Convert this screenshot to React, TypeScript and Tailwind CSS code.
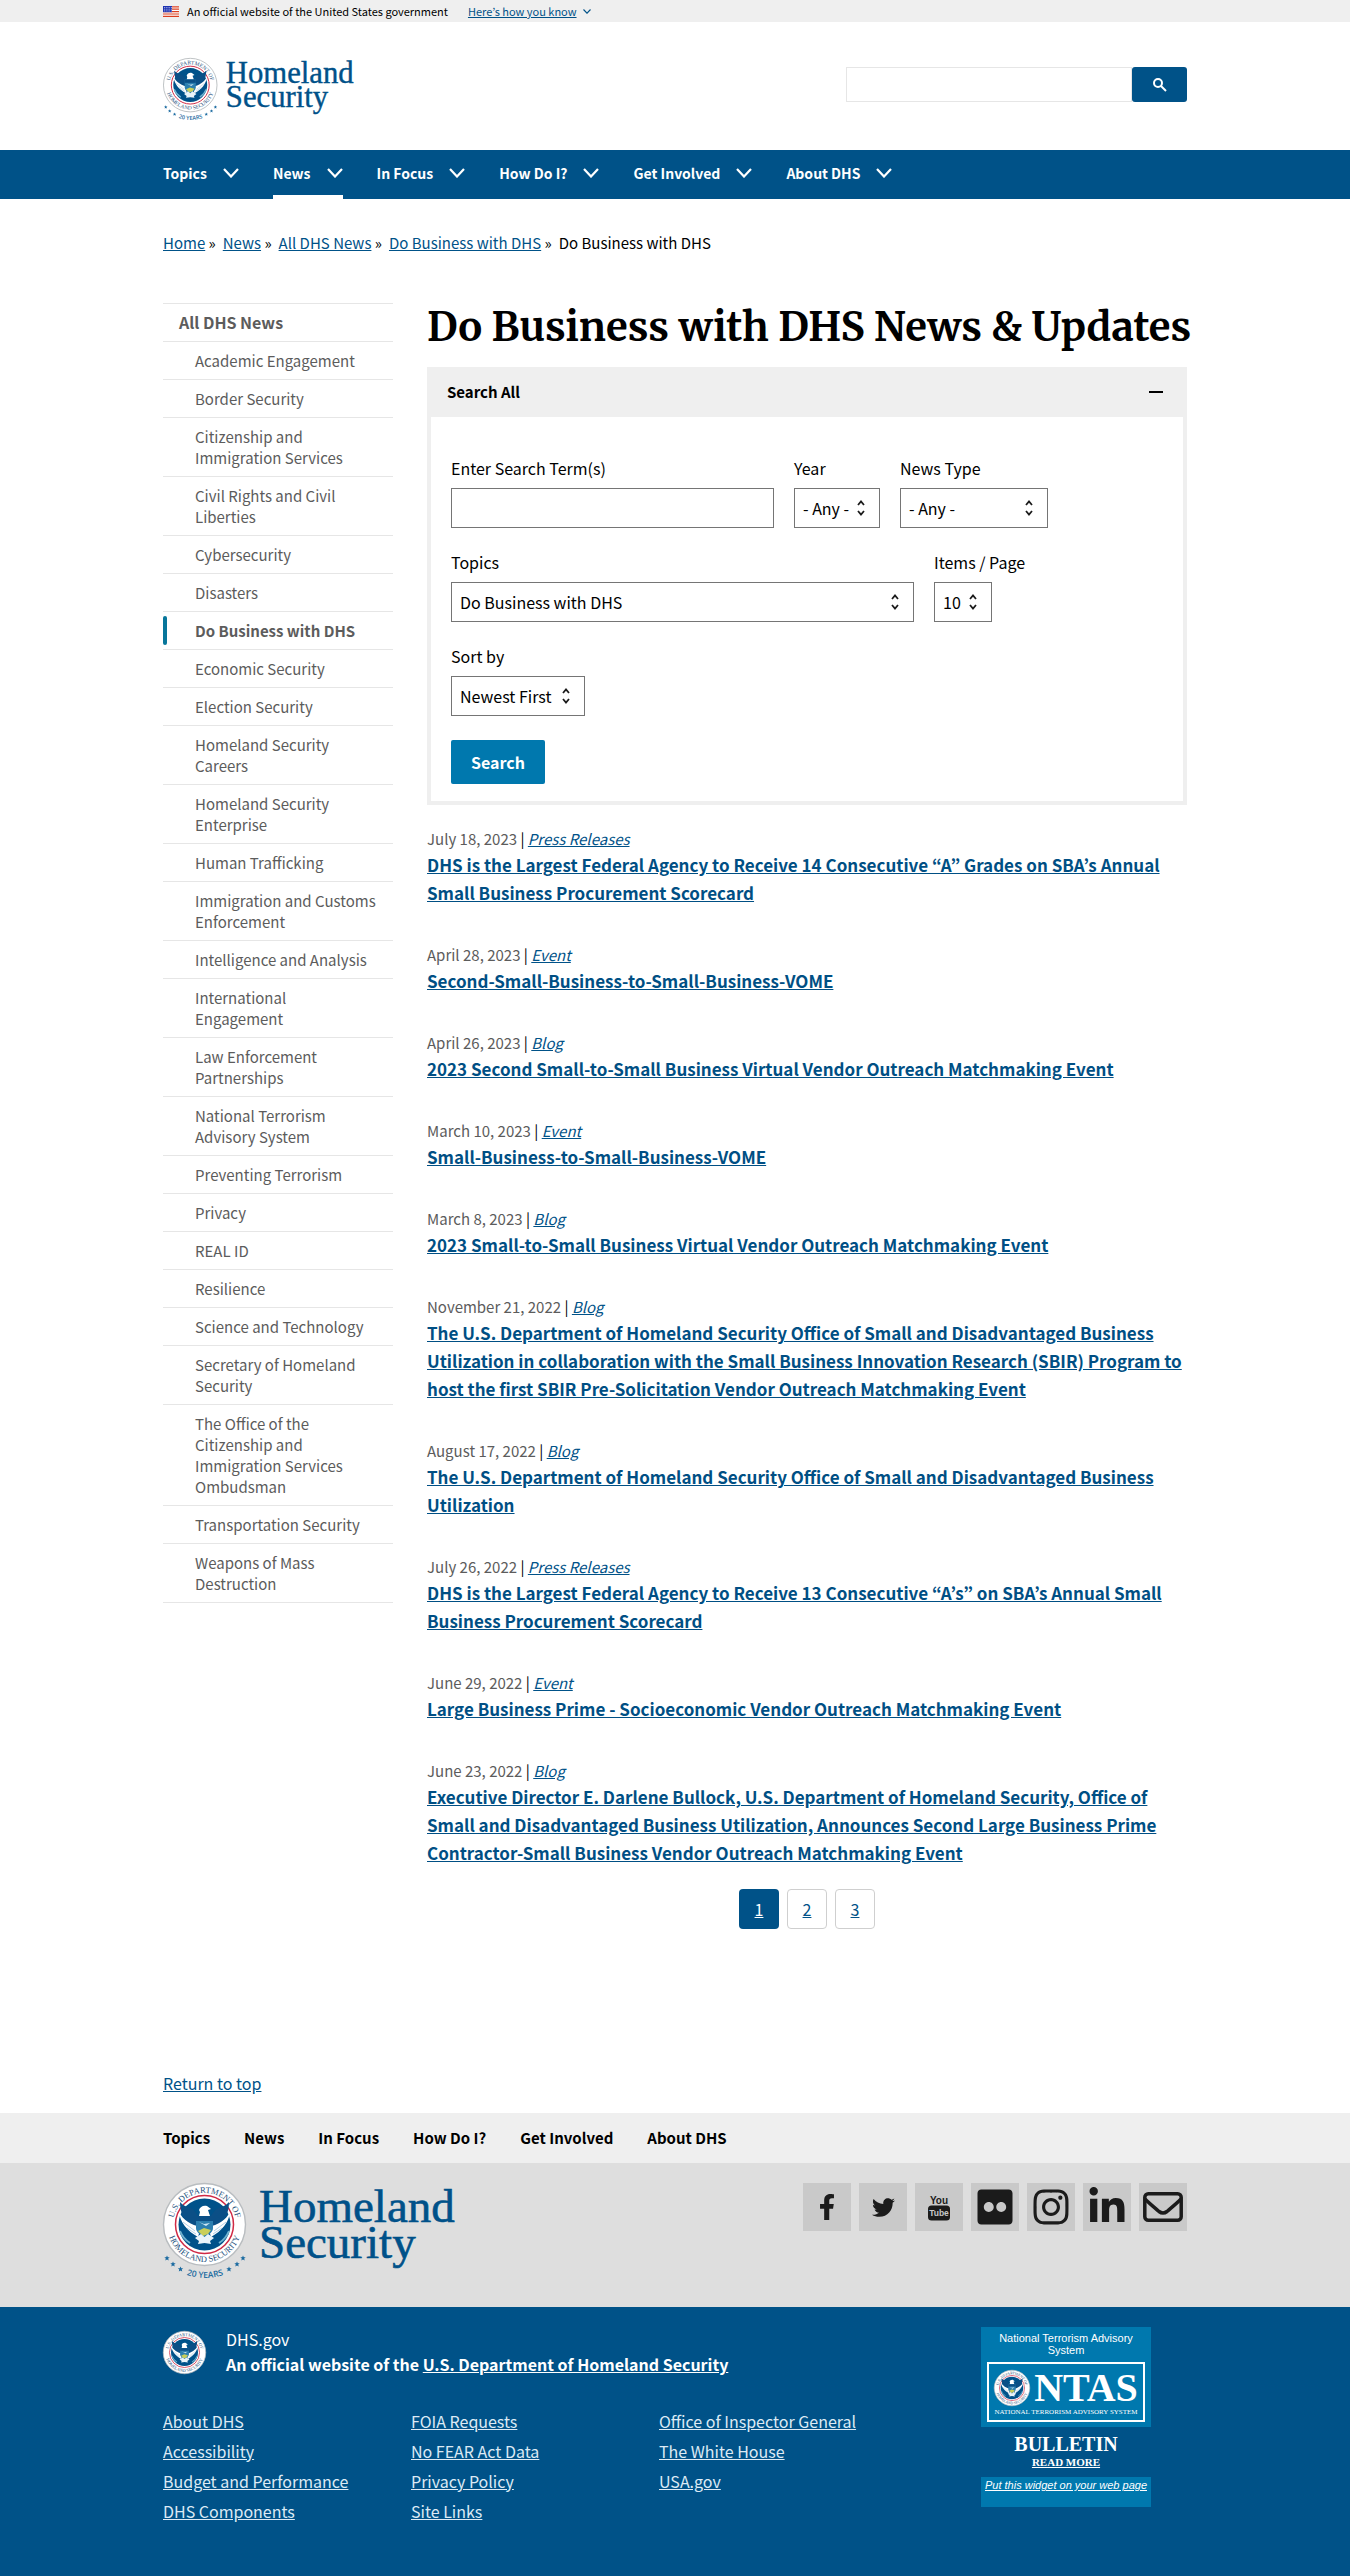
import { useId, type ReactNode } from "react";
import { FaFacebookF, FaFlickr, FaInstagram, FaLinkedinIn, FaTwitter } from "react-icons/fa";

const sections = ["Topics", "News", "In Focus", "How Do I?", "Get Involved", "About DHS"];

const newsTopics = [
  "Academic Engagement",
  "Border Security",
  "Citizenship and Immigration Services",
  "Civil Rights and Civil Liberties",
  "Cybersecurity",
  "Disasters",
  "Do Business with DHS",
  "Economic Security",
  "Election Security",
  "Homeland Security Careers",
  "Homeland Security Enterprise",
  "Human Trafficking",
  "Immigration and Customs Enforcement",
  "Intelligence and Analysis",
  "International Engagement",
  "Law Enforcement Partnerships",
  "National Terrorism Advisory System",
  "Preventing Terrorism",
  "Privacy",
  "REAL ID",
  "Resilience",
  "Science and Technology",
  "Secretary of Homeland Security",
  "The Office of the Citizenship and Immigration Services Ombudsman",
  "Transportation Security",
  "Weapons of Mass Destruction",
];

const results = [
  { date: "July 18, 2023", type: "Press Releases", title: "DHS is the Largest Federal Agency to Receive 14 Consecutive “A” Grades on SBA’s Annual Small Business Procurement Scorecard" },
  { date: "April 28, 2023", type: "Event", title: "Second-Small-Business-to-Small-Business-VOME" },
  { date: "April 26, 2023", type: "Blog", title: "2023 Second Small-to-Small Business Virtual Vendor Outreach Matchmaking Event" },
  { date: "March 10, 2023", type: "Event", title: "Small-Business-to-Small-Business-VOME" },
  { date: "March 8, 2023", type: "Blog", title: "2023 Small-to-Small Business Virtual Vendor Outreach Matchmaking Event" },
  { date: "November 21, 2022", type: "Blog", title: "The U.S. Department of Homeland Security Office of Small and Disadvantaged Business Utilization in collaboration with the Small Business Innovation Research (SBIR) Program to host the first SBIR Pre-Solicitation Vendor Outreach Matchmaking Event" },
  { date: "August 17, 2022", type: "Blog", title: "The U.S. Department of Homeland Security Office of Small and Disadvantaged Business Utilization" },
  { date: "July 26, 2022", type: "Press Releases", title: "DHS is the Largest Federal Agency to Receive 13 Consecutive “A’s” on SBA’s Annual Small Business Procurement Scorecard" },
  { date: "June 29, 2022", type: "Event", title: "Large Business Prime - Socioeconomic Vendor Outreach Matchmaking Event" },
  { date: "June 23, 2022", type: "Blog", title: "Executive Director E. Darlene Bullock, U.S. Department of Homeland Security, Office of Small and Disadvantaged Business Utilization, Announces Second Large Business Prime Contractor-Small Business Vendor Outreach Matchmaking Event" },
];

const footerLinks = [
  ["About DHS", "Accessibility", "Budget and Performance", "DHS Components"],
  ["FOIA Requests", "No FEAR Act Data", "Privacy Policy", "Site Links"],
  ["Office of Inspector General", "The White House", "USA.gov"],
];

function Container({ children, className = "" }: { children: ReactNode; className?: string }) {
  return <div className={`mx-auto w-full max-w-[1024px] ${className}`}>{children}</div>;
}

/* The department seal, drawn in an 83 × 83 box. */
function SealArt() {
  const id = useId();
  return (
    <g>
      <circle cx="41.5" cy="41.5" r="41" fill="#fff" stroke="#b9bdc0" strokeWidth="1.4" />
      <circle cx="41.5" cy="41.5" r="29" fill="#fff" stroke="#cf2a45" strokeWidth="1.5" />
      <circle cx="41.5" cy="41.5" r="26" fill="#00528a" />
      <path id={`${id}t`} d="M10 44a31.600 31.600 0 1 1 63 0" fill="none" />
      <path id={`${id}b`} d="M4 41.5a37.5 37.5 0 0 0 75 0" fill="none" />
      <g fill="#1c4f7c" fontFamily='"Liberation Serif", serif' fontSize="8.5" textAnchor="middle">
        <text><textPath href={`#${id}t`} startOffset="50%">U.S. DEPARTMENT OF</textPath></text>
        <text><textPath href={`#${id}b`} startOffset="50%">HOMELAND SECURITY</textPath></text>
      </g>
      <path d="M17 19c3 4 8 5 13 7l8 11 1 9-9-3C21 38 17 30 17 19zM66 19c-3 4-8 5-13 7l-8 11-1 9 9-3c9-5 13-13 13-24z" fill="#0b4f86" />
      <path d="M16 29c1 10 8 19 19 25l3-10C28 42 20 37 16 29zM67 29c-1 10-8 19-19 25l-3-10c10-2 18-7 22-15z" fill="#fff" />
      <path d="M20 39l12 9M24 45l9 6M63 39l-12 9M59 45l-9 6" stroke="#9cc3de" strokeWidth=".8" />
      <path d="M36 27c1-3 4-5 8-4l4 3-3 1 2 6H36l1-4z" fill="#fff" />
      <path d="M33 33h17v12c0 4-4 7-8.500 9C37 52 33 49 33 45z" fill="#2c7fb0" />
      <path d="M33 33h17v5H33z" fill="#0b4f86" />
      <path d="M36 39l5 2 6-1-4 3z" fill="#cfe6f3" />
      <path d="M35 48l6-3 7 2-3 4-5 2z" fill="#c9cf5a" />
      <path d="M32 55l6-4 3.500 3 3.500-3 6 4-4 3 1 3-6.500-1-6.500 1 1-3z" fill="#e9f4fa" />
      <path d="M17 48c2 5 5 9 10 12M66 48c-2 5-5 9-10 12" fill="none" stroke="#6fb2cf" strokeWidth="2" />
    </g>
  );
}

function Seal({ className }: { className: string }) {
  return (
    <svg viewBox="0 0 83 83" className={`overflow-visible ${className}`} aria-hidden="true">
      <SealArt />
    </svg>
  );
}

function Logo({ className }: { className: string }) {
  const id = useId();
  const stars: [number, number][] = [[4, 75], [10, 81], [17.5, 86], [66, 86], [74, 81], [80, 75]];
  return (
    <svg viewBox="0 0 292 98" className={`overflow-visible ${className}`} role="img" aria-label="Homeland Security, 20 years">
      <SealArt />
      <g fill="#1a6aa0">
        {stars.map(([x, y]) => (
          <path key={x} transform={`translate(${x} ${y})`} d="M0-2.600.8-.8 2.700-.7 1.200.6 1.700 2.500 0 1.400-1.700 2.500-1.200.6-2.700-.7-.8-.8z" />
        ))}
        <path id={id} d="M14 88a60 60 0 0 0 56 0" fill="none" />
        <text fontFamily='"Open Sans", sans-serif' fontSize="8.5" fontWeight="600" textAnchor="middle">
          <textPath href={`#${id}`} startOffset="50%">20 YEARS</textPath>
        </text>
      </g>
      <g fill="#005189" stroke="#005189" strokeWidth=".6" fontFamily='"Liberation Serif", serif' fontSize="47">
        <text x="96" y="39">Homeland</text>
        <text x="96" y="75">Security</text>
      </g>
    </svg>
  );
}

function Flag() {
  return (
    <svg viewBox="0 0 16 11" className="h-[11px] w-4" aria-hidden="true">
      <path d="M0 0h16v11H0z" fill="#fff" />
      <path d="M0 .8h16M0 3.200h16M0 5.600h16M0 8h16M0 10.400h16" stroke="#db3e1f" strokeWidth="1.200" />
      <path d="M0 0h9v6.200H0z" fill="#1e33b1" />
      <path d="M1 1.500h8M1 3.200h8M1 4.900h8" stroke="#fff" strokeWidth=".7" strokeDasharray=".8 1" />
    </svg>
  );
}

function Chevron({ className }: { className: string }) {
  return (
    <svg viewBox="0 0 16 10" className={className} fill="none" stroke="currentColor" strokeWidth="2.200" aria-hidden="true">
      <path d="M1 1l7 7.500L15 1" />
    </svg>
  );
}

function SelectField({ id, label, value, width }: { id: string; label: string; value: string; width: string }) {
  return (
    <div>
      <label htmlFor={id} className="block">{label}</label>
      <div className={`relative mt-2 ${width}`}>
        <select id={id} className="h-10 w-full appearance-none border border-[#757575] bg-white px-2">
          <option>{value}</option>
        </select>
        <svg viewBox="0 0 8 16" className="pointer-events-none absolute right-[15px] top-3 h-4 w-2" fill="none" stroke="#1b1b1b" strokeWidth="1.800" aria-hidden="true">
          <path d="M1 5l3-3.500L7 5M1 11l3 3.500L7 11" />
        </svg>
      </div>
    </div>
  );
}

function YouTubeIcon() {
  return (
    <svg viewBox="0 0 24 28" className="h-7 w-6" fontFamily='"Liberation Sans Narrow", "Liberation Sans", sans-serif' fontWeight="700" textAnchor="middle" aria-hidden="true">
      <text x="12" y="11" fontSize="10" fill="#1b1b1b">You</text>
      <rect x="1" y="12.500" width="22" height="15" rx="3.500" fill="#1b1b1b" />
      <text x="12" y="23" fontSize="8.500" fill="#c9c9c9">Tube</text>
    </svg>
  );
}

function MailIcon() {
  return (
    <svg viewBox="0 0 40 30" className="h-[30px] w-10" fill="none" stroke="#1b1b1b" strokeWidth="3.500" aria-hidden="true">
      <rect x="1.800" y="1.800" width="36.400" height="26.400" rx="3.500" />
      <path d="M2 7c5 5 10 9 14 12.500 3 2.300 5 2.300 8 0C28 16 33 12 38 7" />
    </svg>
  );
}

const socials: { name: string; icon: ReactNode }[] = [
  { name: "Facebook", icon: <FaFacebookF className="size-[26px]" /> },
  { name: "Twitter", icon: <FaTwitter className="size-[23px]" /> },
  { name: "YouTube", icon: <YouTubeIcon /> },
  { name: "Flickr", icon: <FaFlickr className="size-10" /> },
  { name: "Instagram", icon: <FaInstagram className="size-10" /> },
  { name: "LinkedIn", icon: <FaLinkedinIn className="size-10" /> },
  { name: "Email", icon: <MailIcon /> },
];

function Breadcrumb() {
  return (
    <nav aria-label="Breadcrumb" className="pt-8 text-[15px]">
      <ol className="flex flex-wrap gap-x-[7px]">
        {["Home", "News", "All DHS News", "Do Business with DHS"].map((name) => (
          <li key={name}>
            <a href="#" className="text-[#005288] underline">{name}</a> »
          </li>
        ))}
        <li aria-current="page">Do Business with DHS</li>
      </ol>
    </nav>
  );
}

function Sidebar() {
  return (
    <nav aria-label="News topics" className="w-[230px] shrink-0 border-t border-[#e6e6e6] text-[15px] leading-[21px] text-[#5c5c5c]">
      <a href="#" className="block border-b border-[#e6e6e6] py-2 pl-4 text-[16px] font-bold">All DHS News</a>
      <ul>
        {newsTopics.map((topic) => {
          const active = topic === "Do Business with DHS";
          return (
            <li key={topic} className="relative border-b border-[#e6e6e6]">
              {active && <span className="absolute inset-y-1 left-0 w-1 rounded-full bg-[#07769b]" />}
              <a href="#" className={`block py-2 pl-8 pr-4 ${active ? "font-bold" : ""}`}>{topic}</a>
            </li>
          );
        })}
      </ul>
    </nav>
  );
}

function SearchPanel() {
  return (
    <section>
      <button type="button" aria-expanded="true" className="flex h-[50px] w-full items-center justify-between bg-[#efefef] px-5 text-[15px] font-bold">
        Search All
        <span className="mr-1 h-[2px] w-[14px] bg-black" />
      </button>
      <form className="border-4 border-t-0 border-[#efefef] px-5 pb-[17px] pt-[39px]" onSubmit={(e) => e.preventDefault()}>
        <div className="flex gap-5">
          <div>
            <label htmlFor="terms" className="block">Enter Search Term(s)</label>
            <input id="terms" type="text" className="mt-2 block h-10 w-[323px] border border-[#757575] px-2" />
          </div>
          <SelectField id="year" label="Year" value="- Any -" width="w-[86px]" />
          <SelectField id="type" label="News Type" value="- Any -" width="w-[148px]" />
        </div>
        <div className="mt-[22px] flex gap-5">
          <SelectField id="topic" label="Topics" value="Do Business with DHS" width="w-[463px]" />
          <SelectField id="count" label="Items / Page" value="10" width="w-[58px]" />
        </div>
        <div className="mt-[22px]">
          <SelectField id="sort" label="Sort by" value="Newest First" width="w-[134px]" />
        </div>
        <button type="submit" className="mt-6 h-11 rounded-[2px] bg-[#0078ae] px-5 font-bold text-white">Search</button>
      </form>
    </section>
  );
}

function Results() {
  return (
    <ul className="mt-[22px] space-y-9">
      {results.map((item) => (
        <li key={item.title}>
          <p className="text-[15px]">
            <span className="text-[#5c5c5c]">{item.date}</span> |{" "}
            <a href="#" className="italic text-[#005288] underline">{item.type}</a>
          </p>
          <h2 className="text-[17px] font-bold leading-7">
            <a href="#" className="text-[#004f84] underline">{item.title}</a>
          </h2>
        </li>
      ))}
    </ul>
  );
}

function Pagination() {
  return (
    <nav aria-label="Pagination" className="mt-[22px] flex justify-center gap-2">
      <a href="#" aria-current="page" className="flex size-10 items-center justify-center rounded bg-[#005288] text-white underline">1</a>
      <a href="#" className="flex size-10 items-center justify-center rounded border border-[#cfcfcf] text-[#005288] underline">2</a>
      <a href="#" className="flex size-10 items-center justify-center rounded border border-[#cfcfcf] text-[#005288] underline">3</a>
    </nav>
  );
}

function NtasWidget() {
  return (
    <aside className="w-[170px] text-center text-white">
      <div className="flex flex-col items-center bg-[#0078ae] pb-[5px] pt-1 font-['Liberation_Sans',sans-serif] text-[11px] leading-3">
        <p className="w-[140px] pt-px">National Terrorism Advisory System</p>
        <div className="mt-[6px] w-[158px] border-2 border-white py-1 font-['Liberation_Serif',serif]">
          <div className="flex items-center justify-center gap-1">
            <Seal className="size-9" />
            <span className="text-[40px] font-bold leading-10">NTAS</span>
          </div>
          <p className="whitespace-nowrap text-[7px] leading-[8px]">NATIONAL TERRORISM ADVISORY SYSTEM</p>
        </div>
      </div>
      <div className="flex h-[50px] flex-col items-center justify-center font-['Liberation_Serif',serif] font-bold">
        <span className="text-[20px] leading-5">BULLETIN</span>
        <a href="#" className="text-[11px] leading-4 underline">READ MORE</a>
      </div>
      <div className="h-[30px] bg-[#0078ae] pt-[2px] font-['Liberation_Sans',sans-serif] text-[11px] italic leading-3">
        <a href="#" className="whitespace-nowrap underline">Put this widget on your web page</a>
      </div>
    </aside>
  );
}

export default function App() {
  return (
    <div id="top" className="bg-white font-['Noto_Sans_CJK_KR','Source_Sans_3',sans-serif] text-[16px] leading-6 text-black">
      <div className="bg-[#efefef]">
        <Container className="flex h-[22px] items-center text-[11px]">
          <Flag />
          <span className="ml-2">An official website of the United States government</span>
          <button type="button" className="ml-5 flex items-center gap-[6px] text-[#005288]">
            <span className="underline">Here’s how you know</span>
            <Chevron className="h-[5px] w-2" />
          </button>
        </Container>
      </div>

      <header>
        <Container className="flex h-32 items-start justify-between">
          <a href="#" className="mt-9 block"><Logo className="h-16 w-[191px]" /></a>
          <form role="search" className="mt-[45px] flex" onSubmit={(e) => e.preventDefault()}>
            <input type="search" aria-label="Search" className="h-[35px] w-[286px] border border-[#e6e6e6] px-2" />
            <button type="submit" aria-label="Search" className="flex h-[35px] w-[55px] items-center justify-center rounded-[3px] bg-[#005288] text-white">
              <svg viewBox="0 0 14 14" className="size-[14px]" fill="none" stroke="currentColor" strokeWidth="2" aria-hidden="true">
                <circle cx="5" cy="5" r="4" />
                <path d="M8 8l5 5" />
              </svg>
            </button>
          </form>
        </Container>
        <nav aria-label="Primary" className="bg-[#005288] text-white">
          <Container className="flex h-[49px] gap-[34px] text-[14px] font-bold">
            {sections.map((name) => (
              <button key={name} type="button" className={`flex items-center gap-4 border-b-4 ${name === "News" ? "border-white" : "border-[#005288]"}`}>
                {name}
                <Chevron className="h-[10px] w-4" />
              </button>
            ))}
          </Container>
        </nav>
      </header>

      <Container>
        <Breadcrumb />
        <div className="mt-12 flex gap-[34px]">
          <Sidebar />
          <main className="min-w-0 flex-1">
            <h1 className="mb-4 whitespace-nowrap font-['Merriweather','DejaVu_Serif_Condensed',serif] text-[40px] font-bold leading-[48px]">
              Do Business with DHS News &amp; Updates
            </h1>
            <SearchPanel />
            <Results />
            <Pagination />
          </main>
        </div>
        <div className="pb-[18px] pt-[142px]">
          <a href="#top" className="text-[#005288] underline">Return to top</a>
        </div>
      </Container>

      <footer>
        <nav aria-label="Footer" className="bg-[#efefef]">
          <Container className="flex h-[50px] items-center gap-[34px] text-[15px] font-bold">
            {sections.map((name) => (
              <a key={name} href="#">{name}</a>
            ))}
          </Container>
        </nav>
        <div className="bg-[#dedede]">
          <Container className="flex items-start justify-between pb-[26px] pt-5">
            <a href="#"><Logo className="h-[98px] w-[292px]" /></a>
            <ul className="flex gap-2">
              {socials.map((s) => (
                <li key={s.name}>
                  <a href="#" aria-label={s.name} className="flex size-12 items-center justify-center bg-[#c9c9c9] text-[#1b1b1b]">{s.icon}</a>
                </li>
              ))}
            </ul>
          </Container>
        </div>
        <div className="bg-[#005288] text-white">
          <Container className="flex justify-between pb-[69px] pt-5">
            <div className="flex-1">
              <div className="flex items-center gap-5">
                <Seal className="size-[43px]" />
                <div className="leading-[25px]">
                  <p>DHS.gov</p>
                  <p className="font-bold">
                    An official website of the <a href="#" className="underline">U.S. Department of Homeland Security</a>
                  </p>
                </div>
              </div>
              <div className="mt-[29px] flex">
                {footerLinks.map((column) => (
                  <ul key={column[0]} className="w-[248px] leading-[30px]">
                    {column.map((name) => (
                      <li key={name}><a href="#" className="text-[#dceaf5] underline">{name}</a></li>
                    ))}
                  </ul>
                ))}
              </div>
            </div>
            <div className="mr-9"><NtasWidget /></div>
          </Container>
        </div>
      </footer>
    </div>
  );
}
